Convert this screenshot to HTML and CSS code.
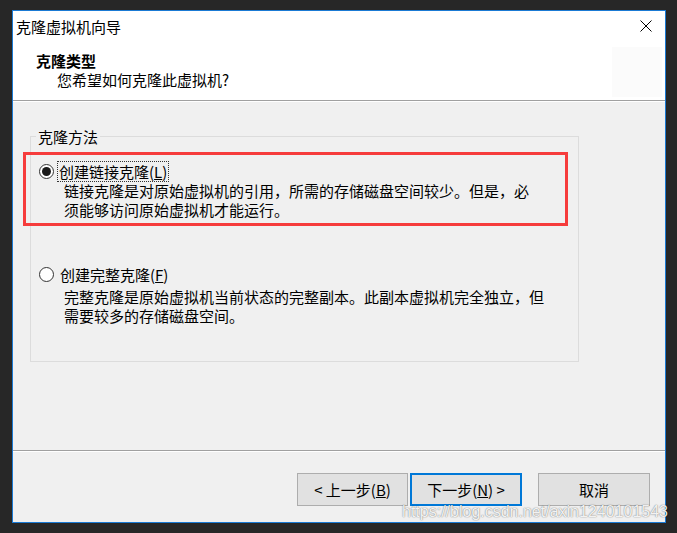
FILE: index.html
```html
<!DOCTYPE html>
<html lang="zh-CN">
<head>
  <meta charset="UTF-8" />
  <meta name="viewport" content="width=device-width, initial-scale=1.0"/>
  <title>克隆虚拟机向导</title>
  <link rel="stylesheet" href="styles.css">
</head>
<body>
  <div class="window">
    <div class="titlebar">
      <span class="title">克隆虚拟机向导</span>
      <svg class="close" width="12" height="12" viewBox="0 0 12 12">
        <path d="M0.5 0.5L11.5 11.5M11.5 0.5L0.5 11.5" stroke="#000" stroke-width="1" fill="none"/>
      </svg>
    </div>

    <div class="header">
      <div class="header-text">
        <div class="header-title">克隆类型</div>
        <div class="header-sub">您希望如何克隆此虚拟机?</div>
      </div>
      <div class="header-icon"></div>
    </div>

    <div class="content">
      <fieldset class="group">
        <legend>克隆方法</legend>

        <div class="option highlight">
          <div class="option-row">
            <span class="radio checked"></span>
            <span class="label focus">创建链接克隆(<u>L</u>)</span>
          </div>
          <div class="desc">链接克隆是对原始虚拟机的引用，所需的存储磁盘空间较少。但是，必<br>须能够访问原始虚拟机才能运行。</div>
        </div>

        <div class="option second">
          <div class="option-row">
            <span class="radio"></span>
            <span class="label">创建完整克隆(<u>F</u>)</span>
          </div>
          <div class="desc">完整克隆是原始虚拟机当前状态的完整副本。此副本虚拟机完全独立，但<br>需要较多的存储磁盘空间。</div>
        </div>
      </fieldset>
    </div>

    <div class="footer">
      <button class="btn">&lt; 上一步(<u>B</u>)</button>
      <button class="btn primary">下一步(<u>N</u>) &gt;</button>
      <button class="btn cancel">取消</button>
    </div>
  </div>

  <div class="watermark">https://blog.csdn.net/axin1240101543</div>
</body>
</html>
```

FILE: styles.css
```css
body {
  margin: 0;
  height: 533px;
  background: #272727;
  font-family: "Noto Sans CJK SC", "Noto Sans", sans-serif;
  font-size: 15px;
  line-height: 19px;
  color: #000;
  position: relative;
  overflow: hidden;
}
.window {
  margin: 10px 0 0 12px;
  width: 654px;
  height: 513px;
  box-sizing: border-box;
  border: 1px solid #1a7ad4;
  background: #f0f0f0;
  display: flex;
  flex-direction: column;
}
.titlebar {
  height: 30px;
  background: #fff;
  display: flex;
  align-items: center;
  justify-content: space-between;
  padding: 0 13px 0 3px;
}
.close {
  display: block;
}
.header {
  height: 59px;
  background: #fff;
  border-bottom: 1px solid #a0a0a0;
  display: flex;
  justify-content: space-between;
  padding-left: 23px;
  padding-right: 3px;
}
.header-text {
  padding-top: 10px;
}
.header-title {
  font-weight: bold;
}
.header-sub {
  padding-left: 21px;
}
.header-icon {
  width: 50px;
  height: 50px;
  margin-top: 6px;
  background: #fbfbfb;
}
.content {
  flex: 1;
  border-top: 1px solid #fff;
}
.group {
  margin: 25px 0 0 17px;
  width: 549px;
  box-sizing: border-box;
  border: 1px solid #dcdcdc;
  padding: 0 0 36px 0;
  min-width: 0;
}
.group legend {
  margin-left: 5px;
  padding: 0 2px;
  line-height: 19px;
}
.option {
  padding-left: 8px;
}
.option.highlight {
  margin: 6px 0 0 -8px;
  width: 545px;
  box-sizing: border-box;
  border: 3px solid #f63c3c;
  padding: 7px 0 4px 13px;
}
.option.second {
  margin-top: 39px;
}
.option-row {
  display: flex;
  align-items: center;
}
.radio {
  width: 15px;
  height: 15px;
  box-sizing: border-box;
  border: 1px solid #333;
  border-radius: 50%;
  background: #fff;
  margin-right: 4px;
  display: flex;
  align-items: center;
  justify-content: center;
}
.radio.checked::after {
  content: "";
  width: 9px;
  height: 9px;
  border-radius: 50%;
  background: #1a1a1a;
}
.label {
  padding: 0 1px;
  margin-left: 1px;
}
.label.focus {
  margin-left: 0;
  outline: 1px dotted #333;
}
.second .desc {
  margin-top: 3px;
}
.desc {
  margin-left: 25px;
}
.footer {
  height: 72px;
  box-sizing: border-box;
  border-top: 1px solid #a0a0a0;
  box-shadow: inset 0 1px #fff;
  display: flex;
  justify-content: flex-end;
  align-items: flex-start;
  padding: 22px 15px 0 0;
}
.btn {
  width: 111px;
  height: 33px;
  background: #e1e1e1;
  border: 1px solid #adadad;
  font-family: inherit;
  font-size: 15px;
  color: #000;
  padding: 0;
}
.btn.primary {
  width: 112px;
  margin-left: 2px;
  border: 2px solid #0078d7;
}
.btn.cancel {
  width: 112px;
  margin-left: 16px;
}
.watermark {
  position: absolute;
  left: 402px;
  top: 503px;
  font-family: "Liberation Sans", Arial, sans-serif;
  font-size: 16px;
  line-height: 18px;
  color: rgba(255, 255, 255, 0.92);
  text-shadow: 0 0 1px rgba(0, 0, 0, 0.5), 0 0 2px rgba(0, 0, 0, 0.2);
}
```
